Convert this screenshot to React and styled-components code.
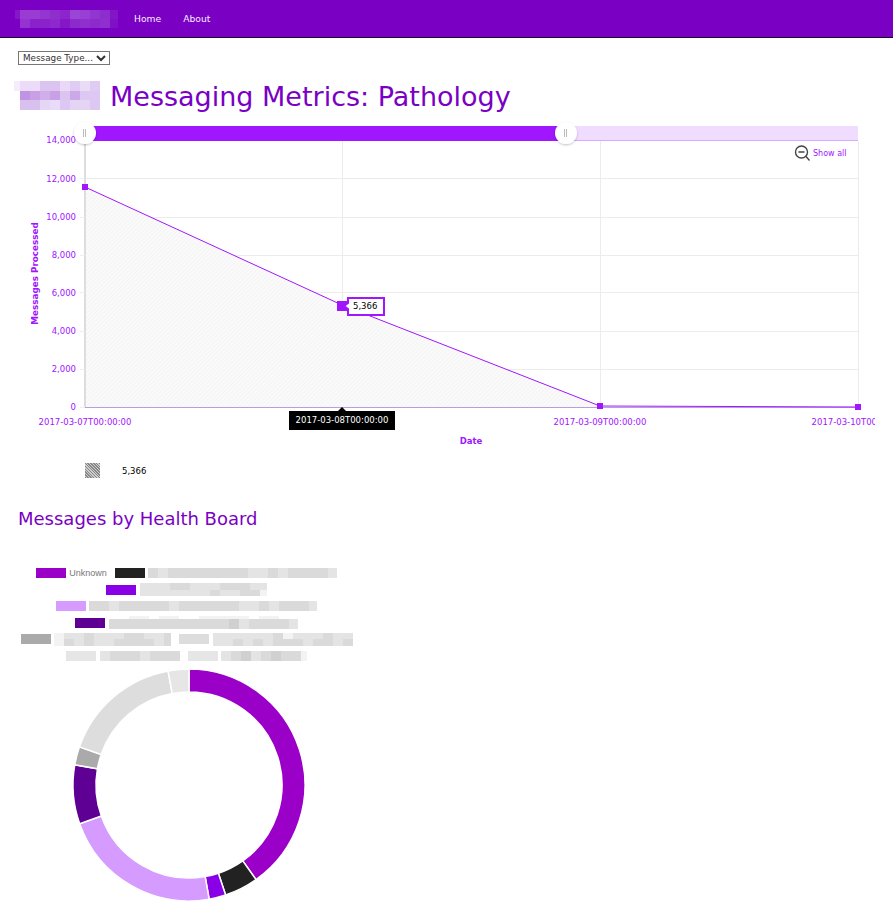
import React from "react";
import styled, { createGlobalStyle } from "styled-components";

const PURPLE = "#7a00c4";
const CHART = "#a016ff";

const GlobalStyle = createGlobalStyle`
  html, body {
    margin: 0;
    padding: 0;
    background: #fff;
    overflow-x: hidden;
    font-family: "DejaVu Sans", Verdana, sans-serif;
  }
`;

const Nav = styled.nav`
  display: flex;
  align-items: center;
  height: 37px;
  padding-left: 15px;
  background: ${PURPLE};
  border-bottom: 1px solid #1c0030;
`;

const NavLink = styled.a`
  margin-left: ${(p) => p.$gap}px;
  color: #f8efff;
  font-size: 9.2px;
  text-decoration: none;
`;

const Main = styled.main`
  padding: 13px 0 10px 18px;
`;

const TypeSelect = styled.select`
  display: block;
  width: 92px;
  height: 14px;
  padding: 0;
  border: 1px solid #767676;
  border-radius: 0;
  background: #fff;
  color: #333;
  font-family: inherit;
  font-size: 8.8px;
`;

const Header = styled.header`
  display: flex;
  align-items: center;
  gap: 10px;
  height: 29px;
  margin: 16px 0 10px -4px;
`;

const Title = styled.h1`
  margin: 2px 0 0;
  color: ${PURPLE};
  font-size: 27px;
  font-weight: 400;
  line-height: 29px;
  white-space: nowrap;
`;

const ChartSvg = styled.svg`
  display: block;
  font-family: "DejaVu Sans", Verdana, sans-serif;
`;

const SeriesLegend = styled.div`
  display: flex;
  align-items: center;
  height: 15px;
  margin: 3px 0 0 67px;
  color: #000;
  font-size: 8.5px;
`;

const HatchSwatch = styled.span`
  width: 15px;
  height: 15px;
  margin-right: 22px;
  background: repeating-linear-gradient(45deg, #888 0 1px, #ccc 1px 2px);
`;

const SubTitle = styled.h2`
  margin: 30px 0 0;
  color: ${PURPLE};
  font-size: 18px;
  font-weight: 400;
  line-height: 22px;
`;

const BoardLegend = styled.div`
  width: 337px;
  margin-top: 35px;
`;

const LegendRow = styled.div`
  display: flex;
  justify-content: center;
  align-items: center;
  gap: 8px;
  height: 16.5px;
`;

const LegendItem = styled.div`
  display: flex;
  align-items: center;
  gap: 3.5px;
`;

const Swatch = styled.span`
  flex: none;
  width: 30px;
  height: 10px;
  background: ${(p) => p.$color};
`;

const LegendText = styled.span`
  color: #777;
  font-family: "Liberation Sans", Arial, sans-serif;
  font-size: 9px;
`;

const Pixels = styled.div`
  display: flex;
  flex-direction: column;
  flex: none;
  width: ${(p) => (p.$width ? `${p.$width}px` : "auto")};
  overflow: hidden;
`;

const PixelRow = styled.div`
  display: flex;
  height: ${(p) => p.$h}px;
`;

const Pixel = styled.span`
  flex: none;
  width: ${(p) => p.$w}px;
  background: ${(p) => p.$color};
`;

const Donut = styled.svg`
  display: block;
  width: 342px;
  height: 240px;
`;

const GREYS = { c: "#d0d0d0", d: "#dadada", e: "#e4e4e4", f: "#f3f3f3", w: "#fff" };

// redacted bits of the screenshot, one string per row, one letter per 10px cell
const Blur = ({ rows, h = [6.5, 6.5], width }) => (
  <Pixels $width={width}>
    {rows.map((row, i) => (
      <PixelRow key={i} $h={h[i]}>
        {row.split("").map((c, j) => (
          <Pixel key={j} $w={10} $color={GREYS[c]} />
        ))}
      </PixelRow>
    ))}
  </Pixels>
);

const LOGO = [
  [[5, "#8418c8"], [10, "#9a3bd3"], [10, "#9a3bd3"], [10, "#9335d0"], [10, "#8f2dcd"], [10, "#8c25cb"], [10, "#9b45d6"], [10, "#9840d4"], [10, "#9136d0"], [10, "#8c2dcd"], [8, "#8415c7"]],
  [[5, PURPLE], [10, "#9433d1"], [10, "#8a22cb"], [10, "#8a22cb"], [10, "#8c28cc"], [10, "#8517c8"], [10, "#8c2acc"], [10, "#8f30ce"], [10, "#8c2acc"], [10, "#8f30ce"], [8, "#8010c6"]],
];

const AVATAR = [
  [[6, "#f7ecfc"], [10, "#ecdcf8"], [10, "#ecdcf8"], [10, "#dcc4f0"], [10, "#dcc4f0"], [10, "#e9d8f7"], [10, "#e0ccf3"], [10, "#eadbf7"], [10, "#e0ccf3"]],
  [[6, "#fff"], [10, "#c093e3"], [10, "#c7a0e6"], [10, "#cfaeea"], [10, "#c7a0e6"], [10, "#dcc4f0"], [10, "#cca8e8"], [10, "#dcc8f2"], [10, "#dcc8f2"]],
  [[6, "#fff"], [10, "#d8c0ef"], [10, "#d8c0ef"], [10, "#e6d6f6"], [10, "#eadcf8"], [10, "#dcc8f2"], [10, "#e5d5f5"], [10, "#e5d5f5"], [10, "#dcc8f2"]],
];

const ColorBlock = ({ rows, h }) => (
  <Pixels>
    {rows.map((row, i) => (
      <PixelRow key={i} $h={h}>
        {row.map(([w, color], j) => (
          <Pixel key={j} $w={w} $color={color} />
        ))}
      </PixelRow>
    ))}
  </Pixels>
);

// value, label centre, grid line row
const Y_TICKS = [
  [14000, 140, 140], [12000, 179, 178], [10000, 217, 217], [8000, 255, 255],
  [6000, 293, 292], [4000, 331, 331], [2000, 369, 369], [0, 407, 407],
];
const X_TICKS = [
  ["2017-03-07T00:00:00", 85],
  ["2017-03-09T00:00:00", 600],
  ["2017-03-10T00:00:00", 858],
];
const POINTS = [[85, 187], [342, 305], [600, 406], [858, 407]];

const LineChart = () => (
  <ChartSvg width="857" height="340" viewBox="18 120 857 340">
    <defs>
      <pattern id="hatch" width="3" height="3" patternUnits="userSpaceOnUse" patternTransform="rotate(45)">
        <rect width="3" height="3" fill="#fafafa" />
        <rect width="1" height="3" fill="#f4f4f4" />
      </pattern>
      <filter id="knob" x="-40%" y="-40%" width="180%" height="180%">
        <feDropShadow dx="0" dy="1" stdDeviation="1" floodColor="#000" floodOpacity="0.25" />
      </filter>
    </defs>

    {Y_TICKS.slice(1, 7).map(([, , y]) => (
      <line key={y} x1="85" x2="858" y1={y + 0.5} y2={y + 0.5} stroke="#ececec" />
    ))}
    {[342, 600, 858].map((x) => (
      <line key={x} x1={x + 0.5} x2={x + 0.5} y1="141" y2="407" stroke="#ececec" />
    ))}

    <polygon points={`85,407 ${POINTS.map((p) => p.join(",")).join(" ")}`} fill="url(#hatch)" />
    <line x1="85" x2="85" y1="141" y2="407" stroke="#dddddd" strokeWidth="2" />
    <line x1="85" x2="858" y1="407.5" y2="407.5" stroke="#b79fdc" />
    <polyline points={POINTS.map((p) => p.join(",")).join(" ")} fill="none" stroke={CHART} />

    {Y_TICKS.map(([value, labelY, y]) => (
      <g key={y}>
        <line x1="80" x2="85" y1={y + 0.5} y2={y + 0.5} stroke="#eeeeee" />
        <text x="76" y={labelY + 3} textAnchor="end" fontSize="8.5" fill={CHART}>
          {value.toLocaleString("en-US")}
        </text>
      </g>
    ))}
    {X_TICKS.map(([label, x]) => (
      <text key={x} x={x} y="425" textAnchor="middle" fontSize="8.5" fill={CHART}>
        {label}
      </text>
    ))}
    <text x="471" y="444" textAnchor="middle" fontSize="8.5" fontWeight="700" fill={CHART}>
      Date
    </text>
    <text transform="translate(38 273.5) rotate(-90)" textAnchor="middle" fontSize="8.8" fontWeight="700" fill={CHART}>
      Messages Processed
    </text>

    {/* scrollbar along the top */}
    <rect x="85" y="126" width="773" height="15" fill="#f0dcff" />
    <line x1="566" x2="858" y1="140.5" y2="140.5" stroke="#d9a8ff" />
    <rect x="85" y="126" width="481" height="15" fill={CHART} />
    {[85, 566].map((x) => (
      <g key={x}>
        <circle cx={x} cy="133" r="11" fill="#fff" filter="url(#knob)" />
        <path d={`M${x - 1.5} 129v8M${x + 0.5} 129v8`} stroke="#bbbbbb" fill="none" />
      </g>
    ))}

    {/* show all */}
    <g fill="none" stroke="#444" strokeWidth="1.4">
      <circle cx="801.5" cy="152" r="6" />
      <path d="M798.5 152h6M806 156.5l3.5 4" />
    </g>
    <text x="813" y="156" fontSize="8" fill={CHART}>Show all</text>

    {POINTS.filter(([x]) => x !== 342).map(([x, y]) => (
      <rect key={x} x={x - 3} y={y - 3} width="6" height="6" fill={CHART} />
    ))}

    {/* value balloon */}
    <rect x="337" y="301" width="10" height="10" fill={CHART} />
    <path d="M348 298h36v17h-36v-6l-4 -3l4 -3z" fill="#fff" stroke={CHART} strokeWidth="2" />
    <text x="353" y="309" fontSize="8.5" fill="#000">5,366</text>

    {/* category balloon */}
    <path d="M289 411h49l4 -4l4 4h49v19h-106z" fill="#000" />
    <text x="342" y="423" textAnchor="middle" fontSize="8.5" fill="#fff">
      2017-03-08T00:00:00
    </text>
  </ChartSvg>
);

const SLICES = [
  [0, 144.7, "#9b00c9"],
  [144.7, 161.6, "#222222"],
  [161.6, 170, "#8a00e6"],
  [170, 250.5, "#d59bff"],
  [250.5, 280, "#5f0095"],
  [280, 289.2, "#aaaaaa"],
  [289.2, 349.6, "#dddddd"],
  [349.6, 360, "#e6e6e6"],
];

const polar = (r, deg) => {
  const a = (deg * Math.PI) / 180;
  return `${(171 + r * Math.sin(a)).toFixed(2)} ${(121 - r * Math.cos(a)).toFixed(2)}`;
};

const slicePath = (from, to) => {
  const large = to - from > 180 ? 1 : 0;
  return [
    `M${polar(116, from)}`,
    `A116 116 0 ${large} 1 ${polar(116, to)}`,
    `L${polar(93, to)}`,
    `A93 93 0 ${large} 0 ${polar(93, from)}`,
    "Z",
  ].join(" ");
};

const App = () => (
  <>
    <GlobalStyle />
    <Nav>
      <ColorBlock rows={LOGO} h={9} />
      <NavLink href="#home" $gap={16}>Home</NavLink>
      <NavLink href="#about" $gap={22}>About</NavLink>
    </Nav>
    <Main>
      <TypeSelect defaultValue="">
        <option value="">Message Type...</option>
      </TypeSelect>
      <Header>
        <ColorBlock rows={AVATAR} h={9.67} />
        <Title>Messaging Metrics: Pathology</Title>
      </Header>
      <LineChart />
      <SeriesLegend>
        <HatchSwatch />
        5,366
      </SeriesLegend>
      <SubTitle>Messages by Health Board</SubTitle>
      <BoardLegend>
        <LegendRow>
          <LegendItem>
            <Swatch $color="#9b00c9" />
            <LegendText>Unknown</LegendText>
          </LegendItem>
          <LegendItem>
            <Swatch $color="#222222" />
            <Blur h={[10]} width={189} rows={["deddddddddeededddde"]} />
          </LegendItem>
        </LegendRow>
        <LegendRow>
          <LegendItem>
            <Swatch $color="#8a00e6" />
            <Blur width={127} rows={["eeeddeeedddee", "eeeeeeedeeddf"]} />
          </LegendItem>
        </LegendRow>
        <LegendRow>
          <LegendItem>
            <Swatch $color="#d59bff" />
            <Blur h={[10]} width={228} rows={["ddedddddeddddddeededdde"]} />
          </LegendItem>
        </LegendRow>
        <LegendRow>
          <LegendItem>
            <Swatch $color="#5f0095" />
            <Blur h={[3, 10]} width={189} rows={["wwffwffwwfffffwffww", "ddddddddddddcedddde"]} />
          </LegendItem>
        </LegendRow>
        <LegendRow>
          <LegendItem>
            <Swatch $color="#aaaaaa" />
            <Blur width={117} rows={["feedeeeddeed", "fdedeeddddedd"]} />
          </LegendItem>
          <LegendItem>
            <Swatch $color="#dddddd" />
            <Blur width={140} rows={["eeeeeedfeeedee", "eedededddedded"]} />
          </LegendItem>
        </LegendRow>
        <LegendRow>
          <LegendItem>
            <Swatch $color="#e6e6e6" />
            <Blur h={[10]} width={80} rows={["edddeddd"]} />
          </LegendItem>
          <LegendItem>
            <Swatch $color="#e6e6e6" />
            <Blur h={[10]} width={86} rows={["edcedcddf"]} />
          </LegendItem>
        </LegendRow>
      </BoardLegend>
      <Donut viewBox="0 0 342 240">
        {SLICES.map(([from, to, color]) => (
          <path key={from} d={slicePath(from, to)} fill={color} stroke="#fff" strokeWidth="1.5" />
        ))}
      </Donut>
    </Main>
  </>
);

export default App;
